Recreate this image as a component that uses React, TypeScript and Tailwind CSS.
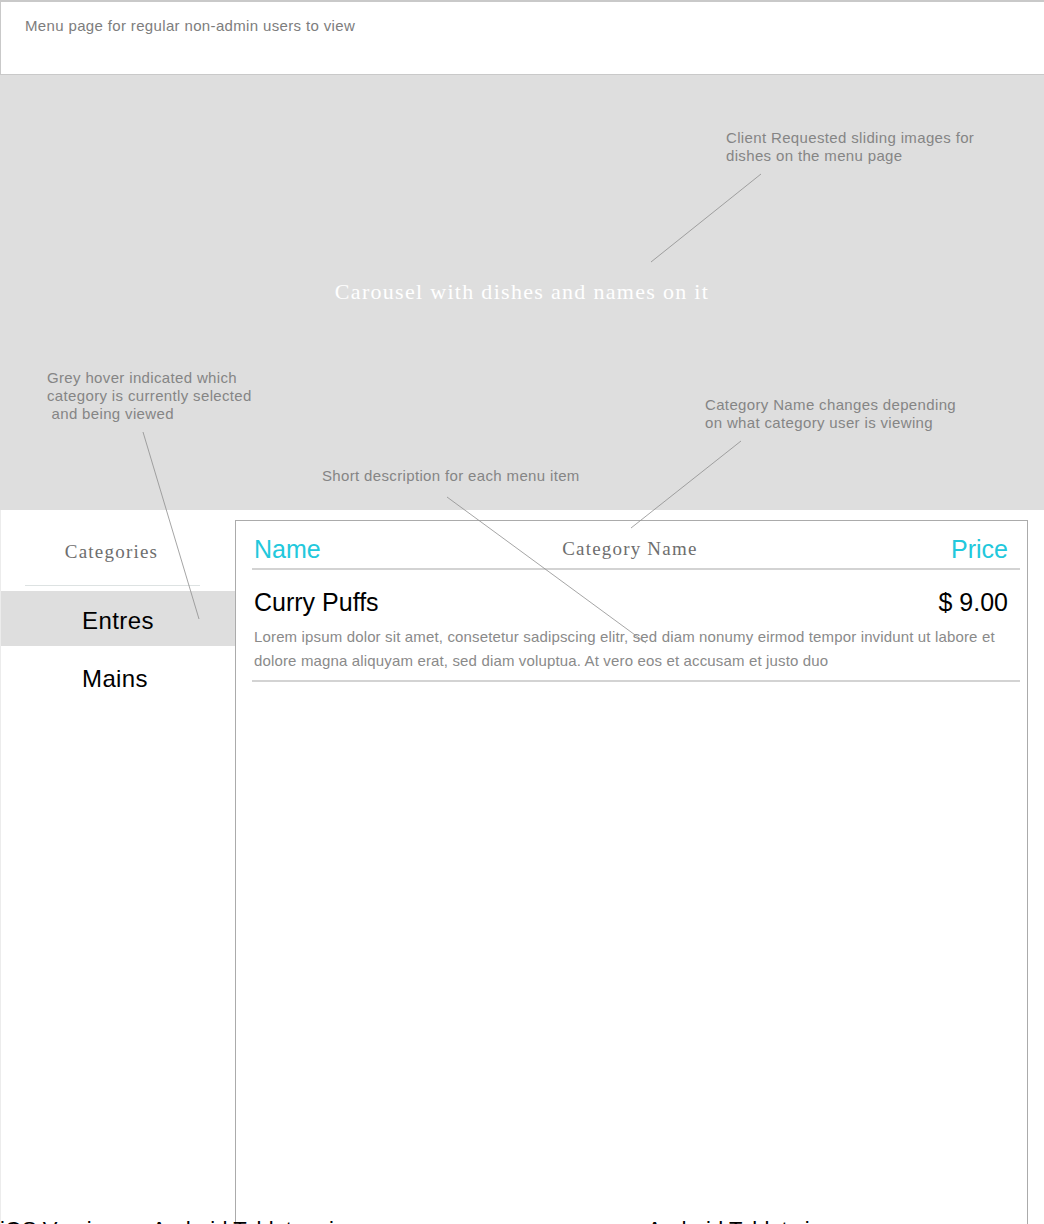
import React from 'react';

const sans = { fontFamily: '"Liberation Sans", Arial, sans-serif' };

const Note = ({ className, lines }: { className: string; lines: string[] }) => (
    <div className={`absolute text-[15px] leading-[18px] tracking-[0.35px] text-[#858585] whitespace-pre ${className}`}>
        {lines.map((l) => (
            <div key={l}>{l}</div>
        ))}
    </div>
);

const App = () => {
    return (
        <div className="relative w-[1044px] h-[1224px] overflow-hidden bg-white font-['Liberation_Sans',Arial,sans-serif]">
            {/* header */}
            <div className="h-[75px] border-t-2 border-b border-l border-[#c9c9c9] pl-6 pt-[13px] text-[15px] tracking-[0.35px] text-[#7d7d7d]">
                Menu page for regular non-admin users to view
            </div>

            {/* carousel */}
            <div className="h-[435px] bg-[#dedede] flex items-center justify-center">
                <span className="text-white text-[22px] tracking-[1.3px] font-['Liberation_Serif',serif] pb-[2px]">
                    Carousel with dishes and names on it
                </span>
            </div>

            <div className="flex">
                {/* sidebar */}
                <div className="w-[235px] shrink-0 border-l border-[#ececec] h-[714px]">
                    <div className="pt-[28px] pb-[18px] text-center pr-[13px] text-[19px] text-[#6e6e6e] tracking-[1.2px] font-['Liberation_Serif',serif]">
                        Categories
                    </div>
                    <div className="mx-6 w-[175px] h-px bg-[#dde2e2]" />
                    <div className="mt-[5px] h-[55px] bg-[#dedede] flex items-center justify-center pt-[5px] text-[24px] tracking-[0.4px] text-black">
                        Entres
                    </div>
                    <div className="h-[58px] flex items-center justify-center pt-[8px] pr-[6px] text-[24px] tracking-[0.4px] text-black">
                        Mains
                    </div>
                </div>

                {/* menu list */}
                <div className="mt-[10px] w-[793px] h-[704px] border border-b-0 border-[#ababab] pl-[16px] pr-[7px]">
                    <div className="h-[49px] flex items-end justify-between pl-[2px] pr-[12px] pb-[5px] border-b-2 border-[#d3d3d3]">
                        <span className="text-[25px] leading-[28px] text-[#22c8dc]">Name</span>
                        <span className="text-[19px] leading-[28px] text-[#6e6e6e] font-['Liberation_Serif',serif] tracking-[1.2px] mr-[12px]">
                            Category Name
                        </span>
                        <span className="text-[25px] leading-[28px] text-[#22c8dc]">Price</span>
                    </div>
                    <div className="pl-[2px] pr-[12px] pt-[18px] pb-[7px] border-b-2 border-[#d3d3d3]">
                        <div className="flex justify-between text-[25px] leading-[28px] text-black">
                            <span>Curry Puffs</span>
                            <span>$ 9.00</span>
                        </div>
                        <p className="mt-[9px] text-[15px] leading-[24px] tracking-[0.15px] text-[#8a8a8a]">
                            Lorem ipsum dolor sit amet, consetetur sadipscing elitr, sed diam nonumy eirmod tempor invidunt ut labore et
                            dolore magna aliquyam erat, sed diam voluptua. At vero eos et accusam et justo duo
                        </p>
                    </div>
                </div>
            </div>

            {/* annotations */}
            <Note className="left-[726px] top-[129px]" lines={['Client Requested sliding images for', 'dishes on the menu page']} />
            <Note className="left-[47px] top-[369px]" lines={['Grey hover indicated which', 'category is currently selected', ' and being viewed']} />
            <Note className="left-[705px] top-[396px]" lines={['Category Name changes depending', 'on what category user is viewing']} />
            <Note className="left-[322px] top-[467px]" lines={['Short description for each menu item']} />

            <svg className="absolute inset-0 pointer-events-none" width="1044" height="1224">
                <g stroke="#8e8e8e" strokeWidth="0.8" fill="none">
                    <line x1="761" y1="174" x2="651" y2="262" />
                    <line x1="143" y1="432" x2="199" y2="619" />
                    <line x1="741" y1="441" x2="631" y2="528" />
                    <line x1="447" y1="497" x2="646" y2="643" />
                </g>
            </svg>

            {/* cut-off caption at the very bottom */}
            <div className="absolute left-0 top-[1217px] w-full flex text-[22px] leading-[26px] text-black" style={sans}>
                <span className="w-[318px]">iOS Version on Android Tablet</span>
                <span className="w-[300px]">view</span>
                <span>on Android Tablet view</span>
            </div>
        </div>
    );
};

export default App;
